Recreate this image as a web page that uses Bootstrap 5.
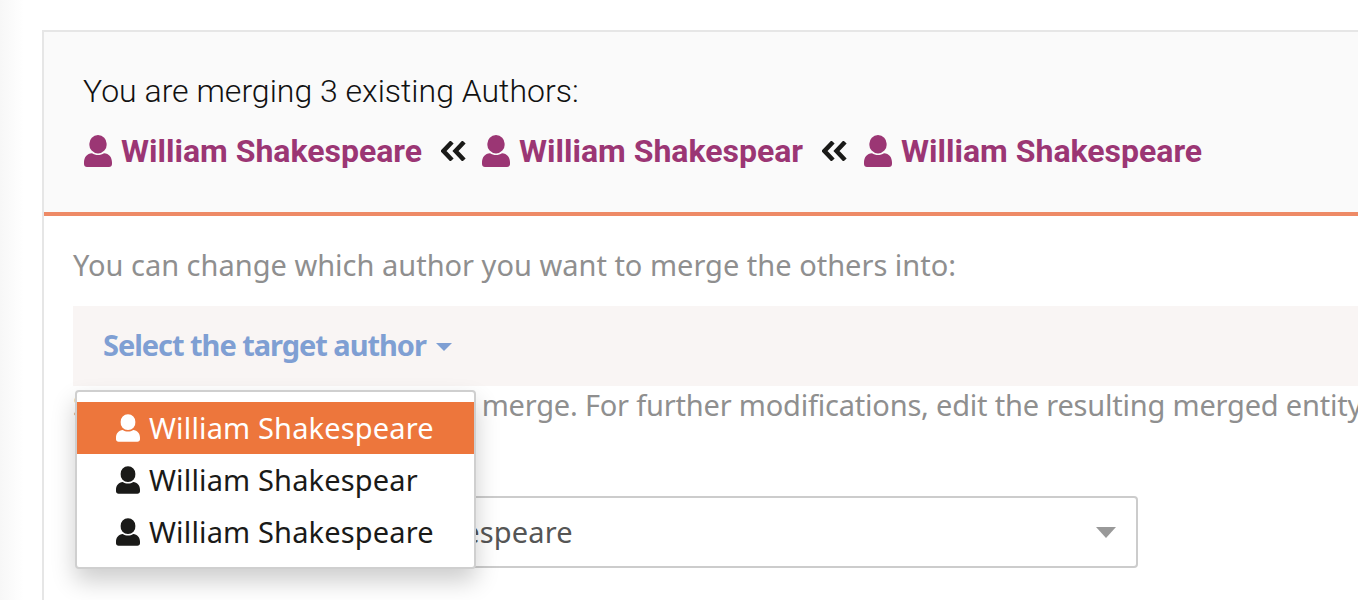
<!DOCTYPE html>
<html lang="en">
<head>
<meta charset="utf-8">
<title>Merge Authors</title>
<link href="https://cdn.jsdelivr.net/npm/bootstrap@5.3.0/dist/css/bootstrap.min.css" rel="stylesheet">
<style>
html,body{height:600px;overflow:hidden;background:#fff}
body{font-family:"Noto Sans",sans-serif;font-size:29px;color:#8f8f8f;width:1358px}
.page-shell{padding:30px 0 0 42px;width:1500px;background:linear-gradient(90deg,#f7f7f7,#fff 24px)}
.merge-panel{border:2px solid #e6e6e6;border-right:0;border-bottom:0;height:570px;background:#fff}
.merge-head{background:#fafafa;border-bottom:4px solid #ee8a66;height:184px;padding:40px 40px 0;font-family:Roboto,sans-serif;color:#111}
.merge-title{font-size:32px;font-weight:300;line-height:38px;margin:0 0 22px -1px}
.merge-names{font-size:32px;font-weight:700;line-height:38px;color:#9b3674}
.merge-names svg.person{width:28px;height:32px;margin-right:9px;fill:currentColor;flex:none}
.merge-sep{width:26px;height:20px;margin:0 15px 0 19px;flex:none}
.merge-sep-last{margin-right:16px}
.merge-body{padding:30px 29px 0;width:1313px;position:relative}
.lead-line{line-height:38px;margin-bottom:22px;white-space:nowrap}
.target-bar{background:#f9f5f4;height:80px;padding:0 30px 2px;margin-right:-400px;color:#7f9fd3;font-weight:700;letter-spacing:-1.04px}
.target-caret{width:0;height:0;border:8px solid transparent;border-top-color:#7f9fd3;border-bottom:0;margin-left:10px;margin-top:3px}
.note-line{line-height:38px;white-space:nowrap;letter-spacing:-.2px}
.value-box{height:72px;margin:72px 0 0 100px;width:965px;border:2px solid #ccc;border-radius:4px;padding:0 20px 0 113px;color:#555;letter-spacing:.15px}
.value-arrow{width:0;height:0;border:10px solid transparent;border-top:11px solid #999;border-bottom:0}
.menu-pop.dropdown-menu{display:block;position:absolute;left:31px;top:174px;width:401px;height:179px;padding:10px 0 8px;margin:0;border:2px solid #cfcfcf;border-radius:4px;background:#fff;box-shadow:0 12px 24px rgba(0,0,0,.2)}
.menu-pop .dropdown-item{height:52px;padding:0 0 0 39px;font-size:29px;color:#1a1a18;gap:9px;letter-spacing:.15px}
.menu-pop .dropdown-item.active{background:#ed763c;color:#fff}
.menu-pop svg{width:24px;height:28px;fill:currentColor;flex:none}
</style>
</head>
<body>
<svg width="0" height="0" class="d-block position-absolute"><defs>
<symbol id="person" viewBox="0 0 28 32"><path d="M14 0a8.600 8.600 0 0 1 8.600 9A8.600 8.600 0 0 1 14 18.400 8.600 8.600 0 0 1 5.400 9 8.600 8.600 0 0 1 14 0zM8 18.200c1.700 1.100 3.800 1.800 6 1.800s4.300-.7 6-1.800c5 .3 8 4 8 9.300V29c0 1.700-1.300 3-3 3H3c-1.700 0-3-1.300-3-3v-1.500c0-5.300 3-9 8-9.300z"/></symbol>
</defs></svg>
<div class="page-shell">
  <div class="merge-panel">
    <div class="merge-head">
      <div class="merge-title">You are merging 3 existing Authors:</div>
      <div class="merge-names d-flex align-items-center">
        <svg class="person"><use href="#person"/></svg><span>William Shakespeare</span>
        <svg class="merge-sep" viewBox="0 0 26 20"><path d="M11 1 2.500 10 11 19" fill="none" stroke="#1a1a18" stroke-width="4.500"/><path d="M23 1 14.500 10 23 19" fill="none" stroke="#1a1a18" stroke-width="4.500"/></svg>
        <svg class="person"><use href="#person"/></svg><span>William Shakespear</span>
        <svg class="merge-sep merge-sep-last" viewBox="0 0 26 20"><path d="M11 1 2.500 10 11 19" fill="none" stroke="#1a1a18" stroke-width="4.500"/><path d="M23 1 14.500 10 23 19" fill="none" stroke="#1a1a18" stroke-width="4.500"/></svg>
        <svg class="person"><use href="#person"/></svg><span>William Shakespeare</span>
      </div>
    </div>
    <div class="merge-body">
      <div class="lead-line">You can change which author you want to merge the others into:</div>
      <div class="target-bar d-flex align-items-center">Select the target author<span class="target-caret"></span></div>
      <div class="note-line">Select the fields to keep in the merge. For further modifications, edit the resulting merged entity.</div>
      <div class="value-box d-flex align-items-center justify-content-between"><span>William Shakespeare</span><span class="value-arrow"></span></div>
      <div class="dropdown-menu menu-pop">
        <a class="dropdown-item active d-flex align-items-center" href="#"><svg><use href="#person"/></svg>William Shakespeare</a>
        <a class="dropdown-item d-flex align-items-center" href="#"><svg><use href="#person"/></svg>William Shakespear</a>
        <a class="dropdown-item d-flex align-items-center" href="#"><svg><use href="#person"/></svg>William Shakespeare</a>
      </div>
    </div>
  </div>
</div>
<script src="https://cdn.jsdelivr.net/npm/bootstrap@5.3.0/dist/js/bootstrap.bundle.min.js"></script>
</body>
</html>
